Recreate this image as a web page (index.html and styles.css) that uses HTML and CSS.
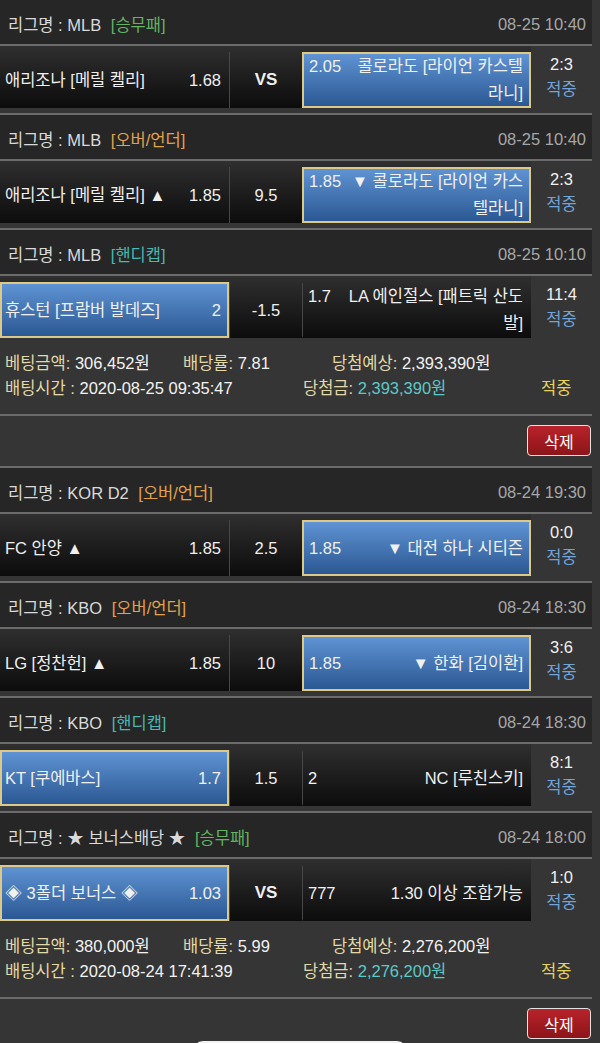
FILE: index.html
```html
<!DOCTYPE html>
<html lang="ko">
<head>
<meta charset="UTF-8"/>
<meta name="viewport" content="width=device-width,initial-scale=1.0"/>
<title>배팅내역</title>
<link rel="stylesheet" href="styles.css">
</head>
<body>

<!-- ─── BET SLIP 1 ─────────────────────────────────────────────────────── -->
<div class="list">
  <div class="game">
    <div class="league"><span>리그명 : MLB <em class="win">[승무패]</em></span><span class="time">08-25 10:40</span></div>
    <div class="match">
      <div class="board">
        <div class="pick home"><span class="team">애리조나 [메릴 켈리]</span><span class="odd">1.68</span></div>
        <div class="mid vs">VS</div>
        <div class="pick away on"><p><span class="odd">2.05</span>콜로라도 [라이언 카스텔라니]</p></div>
      </div>
      <div class="score">2:3<b>적중</b></div>
    </div>
  </div>

  <div class="game">
    <div class="league"><span>리그명 : MLB <em class="ou">[오버/언더]</em></span><span class="time">08-25 10:40</span></div>
    <div class="match">
      <div class="board">
        <div class="pick home"><span class="team">애리조나 [메릴 켈리] ▲</span><span class="odd">1.85</span></div>
        <div class="mid">9.5</div>
        <div class="pick away on"><p><span class="odd">1.85</span><span class="dn">▼</span> 콜로라도 [라이언 카스텔라니]</p></div>
      </div>
      <div class="score">2:3<b>적중</b></div>
    </div>
  </div>

  <div class="game">
    <div class="league"><span>리그명 : MLB <em class="hd">[핸디캡]</em></span><span class="time">08-25 10:10</span></div>
    <div class="match">
      <div class="board">
        <div class="pick home on"><span class="team">휴스턴 [프람버 발데즈]</span><span class="odd">2</span></div>
        <div class="mid">-1.5</div>
        <div class="pick away"><p><span class="odd">1.7</span>LA 에인절스 [패트릭 산도발]</p></div>
      </div>
      <div class="score">11:4<b>적중</b></div>
    </div>
    <div class="slip">
      <p><span class="c1">베팅금액: <i>306,452원</i></span><span class="c2">배당률: <i>7.81</i></span><span>당첨예상: <i>2,393,390원</i></span></p>
      <p><span class="c3">배팅시간 : <i>2020-08-25 09:35:47</i></span><span class="c4">당첨금: <i class="won">2,393,390원</i></span><span class="hit">적중</span></p>
    </div>
    <div class="tools"><button class="del">삭제</button></div>
  </div>

<!-- ─── BET SLIP 2 ─────────────────────────────────────────────────────── -->
  <div class="game">
    <div class="league"><span>리그명 : KOR D2 <em class="ou">[오버/언더]</em></span><span class="time">08-24 19:30</span></div>
    <div class="match">
      <div class="board">
        <div class="pick home"><span class="team">FC 안양 ▲</span><span class="odd">1.85</span></div>
        <div class="mid">2.5</div>
        <div class="pick away on"><p><span class="odd">1.85</span><span class="dn">▼</span> 대전 하나 시티즌</p></div>
      </div>
      <div class="score">0:0<b>적중</b></div>
    </div>
  </div>

  <div class="game">
    <div class="league"><span>리그명 : KBO <em class="ou">[오버/언더]</em></span><span class="time">08-24 18:30</span></div>
    <div class="match">
      <div class="board">
        <div class="pick home"><span class="team">LG [정찬헌] ▲</span><span class="odd">1.85</span></div>
        <div class="mid">10</div>
        <div class="pick away on"><p><span class="odd">1.85</span><span class="dn">▼</span> 한화 [김이환]</p></div>
      </div>
      <div class="score">3:6<b>적중</b></div>
    </div>
  </div>

  <div class="game">
    <div class="league"><span>리그명 : KBO <em class="hd">[핸디캡]</em></span><span class="time">08-24 18:30</span></div>
    <div class="match">
      <div class="board">
        <div class="pick home on"><span class="team">KT [쿠에바스]</span><span class="odd">1.7</span></div>
        <div class="mid">1.5</div>
        <div class="pick away"><p><span class="odd">2</span>NC [루친스키]</p></div>
      </div>
      <div class="score">8:1<b>적중</b></div>
    </div>
  </div>

  <div class="game">
    <div class="league"><span>리그명 : ★ 보너스배당 ★ <em class="win">[승무패]</em></span><span class="time">08-24 18:00</span></div>
    <div class="match">
      <div class="board">
        <div class="pick home on"><span class="team">◈ 3폴더 보너스 ◈</span><span class="odd">1.03</span></div>
        <div class="mid vs">VS</div>
        <div class="pick away"><p><span class="odd">777</span>1.30 이상 조합가능</p></div>
      </div>
      <div class="score">1:0<b>적중</b></div>
    </div>
    <div class="slip">
      <p><span class="c1">베팅금액: <i>380,000원</i></span><span class="c2">배당률: <i>5.99</i></span><span>당첨예상: <i>2,276,200원</i></span></p>
      <p><span class="c3">배팅시간 : <i>2020-08-24 17:41:39</i></span><span class="c4">당첨금: <i class="won">2,276,200원</i></span><span class="hit">적중</span></p>
    </div>
    <div class="tools"><button class="del">삭제</button></div>
  </div>
</div>

<!-- ─── BOTTOM SHEET HANDLE ────────────────────────────────────────────── -->
<div class="sheet"></div>

</body>
</html>
```

FILE: styles.css
```css
:root{
  --bg:#353535;--head:#262626;--line:#6b6b6b;
  --gold:#dcc98a;--label:#e3d9a6;--blue:#6fa4dc;
}
*,*::before,*::after{box-sizing:border-box;margin:0;padding:0}
body{background:var(--bg);color:#f0f0f0;font-family:"Liberation Sans","Noto Sans CJK KR",sans-serif;font-size:16.5px;font-feature-settings:"palt";overflow:hidden}
em,i,b{font-style:normal;font-weight:normal}

/* ─── LIST ───────────────────────────────────────────────────────────── */
.list{width:592px}
.game{border-bottom:2px solid var(--line)}
.league{height:46px;display:flex;justify-content:space-between;align-items:center;padding:4px 6px 0 8px;background:var(--head);border-bottom:2px solid var(--line);color:#dadada}
.league em{margin-left:5px}
.win{color:#62b362}.ou{color:#e4a24a}.hd{color:#47b8b2}
.time{color:#a6a6a6}

/* ─── MATCH ROW ──────────────────────────────────────────────────────── */
.match{display:flex;margin-bottom:5px}
.board{display:flex;width:531px;height:62px;padding-top:6px;background:linear-gradient(#2f2f2f,#0c0c0c)}
.pick{width:229px;height:56px;display:flex;align-items:center;line-height:27px;border:2px solid transparent}
.home{justify-content:space-between;gap:6px;padding:0 6px 0 3px}
.home .team{flex:1}
.home .odd{flex-shrink:0}
.away{border-left:1px solid #474747;padding:0 6px 0 5px}
.away p{width:100%;text-align:right}
.away .odd{float:left;margin-right:13px}
.dn{margin-left:-4px}
.pick.on{background:linear-gradient(#5f93d3,#2b5893);border:2px solid var(--gold)}
.away.on{border-left-width:2px}
.mid{width:73px;height:56px;border-left:1px solid #474747;display:flex;align-items:center;justify-content:center}
.vs{font-weight:700;font-size:17px}
.score{flex:1;display:flex;flex-direction:column;align-items:center;justify-content:center;line-height:25px}
.score b{color:var(--blue)}

/* ─── SLIP SUMMARY ───────────────────────────────────────────────────── */
.slip{padding:8px 0 13px 5px;border-bottom:2px solid var(--line);line-height:25px;color:var(--label)}
.slip p{display:flex;white-space:nowrap}
.slip i{color:#f2f2f2}
.slip i.won{color:#5cc8c8}
.c1{width:178px}.c2{width:149px}.c3{width:298px}.c4{width:238px}
.hit{color:#e6d35a}
.tools{height:50px;padding-top:9px;display:flex;justify-content:flex-end}
.del{width:64px;height:31px;margin-right:1px;border:1.5px solid #e2e2e2;border-radius:4px;background:linear-gradient(#b8232a,#8c1519);color:#fff;font:inherit;font-size:16px}

/* ─── SHEET HANDLE ───────────────────────────────────────────────────── */
.sheet{position:fixed;left:193px;bottom:-20px;width:214px;height:22px;border-radius:10px;background:#f2f2f2}
```
